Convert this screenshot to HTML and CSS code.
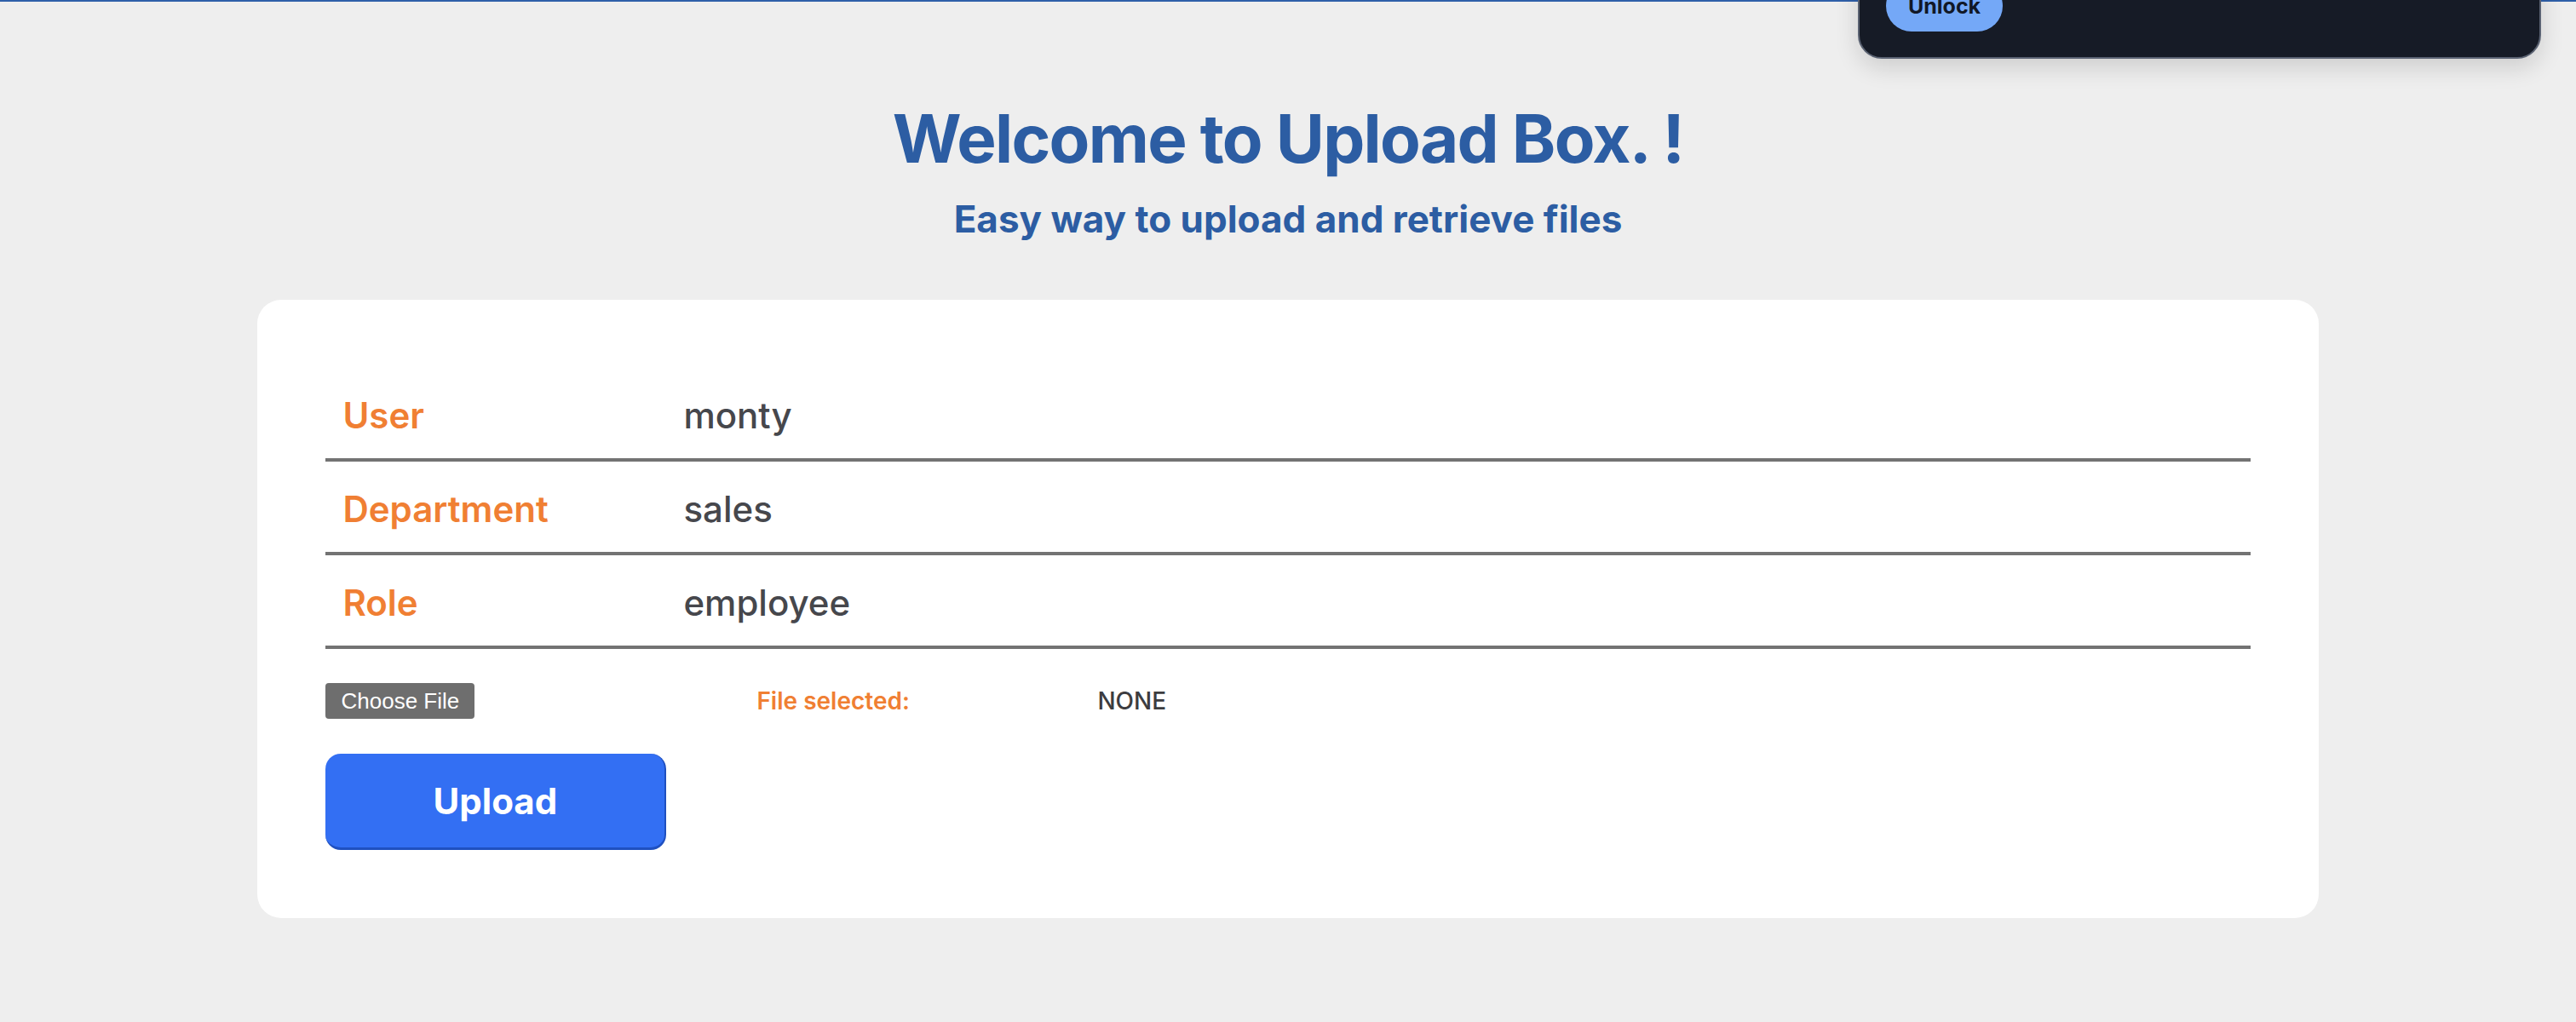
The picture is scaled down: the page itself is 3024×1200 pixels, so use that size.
FILE: index.html
```html
<!DOCTYPE html>
<html lang="en">
<head>
<meta charset="utf-8">
<title>Upload Box</title>
<link rel="stylesheet" href="styles.css">
</head>
<body>
<div class="topline"></div>
<header class="hero">
  <h1 class="hero-title">Welcome to Upload Box. !</h1>
  <p class="hero-sub">Easy way to upload and retrieve files</p>
</header>
<main class="card">
  <div class="info-row">
    <div class="info-label">User</div>
    <div class="info-value">monty</div>
  </div>
  <div class="info-row">
    <div class="info-label">Department</div>
    <div class="info-value">sales</div>
  </div>
  <div class="info-row">
    <div class="info-label">Role</div>
    <div class="info-value">employee</div>
  </div>
  <div class="file-row">
    <div class="picker"><span class="choose-btn">Choose File</span></div>
    <div class="file-label">File selected:</div>
    <div class="file-value">NONE</div>
  </div>
  <button class="upload-btn" type="button">Upload</button>
</main>
<div class="unlock-panel">
  <button class="unlock-btn" type="button">Unlock</button>
</div>
</body>
</html>
```
FILE: styles.css
```css
html, body {
  margin: 0;
  padding: 0;
}
body {
  background: #eeeeee;
  font-family: Inter, "Noto Sans", sans-serif;
  min-height: 1200px;
  position: relative;
  overflow: hidden;
}
.topline {
  height: 2px;
  background: #2e5fa9;
}
.hero {
  padding-top: 114px;
  text-align: center;
  color: #2c5da3;
}
.hero-title {
  margin: 0;
  font-size: 78px;
  line-height: 94px;
  font-weight: 700;
  letter-spacing: -1.7px;
}
.hero-sub {
  margin: 21px 0 0;
  font-size: 44px;
  line-height: 53px;
  font-weight: 700;
}
.card {
  width: 80%;
  margin: 68px auto 0;
  box-sizing: border-box;
  background: #ffffff;
  border-radius: 28px;
  padding: 80px;
}
.info-row {
  display: grid;
  grid-template-columns: 400px 1fr;
  align-items: center;
  height: 101px;
  padding-top: 5px;
  box-sizing: content-box;
  border-bottom: 4px solid #737373;
}
.info-label,
.info-value {
  padding-left: 20px;
  font-size: 42px;
}
.info-label {
  color: #f07f33;
  font-weight: 600;
}
.info-value {
  color: #46474c;
  font-weight: 500;
}
.file-row {
  display: flex;
  align-items: center;
  height: 42px;
  margin-top: 40px;
}
.picker {
  width: 506px;
  flex: none;
}
.choose-btn {
  display: inline-flex;
  align-items: center;
  justify-content: center;
  width: 175px;
  height: 42px;
  box-sizing: border-box;
  background: #6e6e6e;
  color: #ffffff;
  border-radius: 4px;
  font-family: "Liberation Sans", Arial, sans-serif;
  font-size: 26px;
}
.file-label {
  width: 400px;
  flex: none;
  color: #f07f33;
  font-size: 28px;
  font-weight: 600;
}
.file-value {
  color: #3c3c40;
  font-size: 28px;
  font-weight: 500;
}
.upload-btn {
  display: block;
  margin-top: 41px;
  width: 400px;
  height: 113px;
  box-sizing: border-box;
  background: #336ff3;
  color: #ffffff;
  border: none;
  border-right: 2px solid #1f50c0;
  border-bottom: 3px solid #1f50c0;
  border-radius: 18px;
  font-family: Inter, "Noto Sans", sans-serif;
  font-size: 42px;
  font-weight: 700;
  padding: 0;
}
.unlock-panel {
  position: absolute;
  top: -140px;
  left: 2181px;
  width: 802px;
  height: 209px;
  box-sizing: border-box;
  background: #161b26;
  border: 2px solid #5a6272;
  border-radius: 28px;
  box-shadow: 0 10px 28px rgba(0, 0, 0, 0.14);
  display: flex;
  align-items: flex-end;
  padding: 0 31px 30px;
}
.unlock-btn {
  height: 60px;
  width: 137px;
  border: none;
  border-radius: 30px;
  background: #74a8f7;
  color: #111827;
  font-family: Inter, "Noto Sans", sans-serif;
  font-size: 25px;
  font-weight: 700;
  padding: 0;
}
```
